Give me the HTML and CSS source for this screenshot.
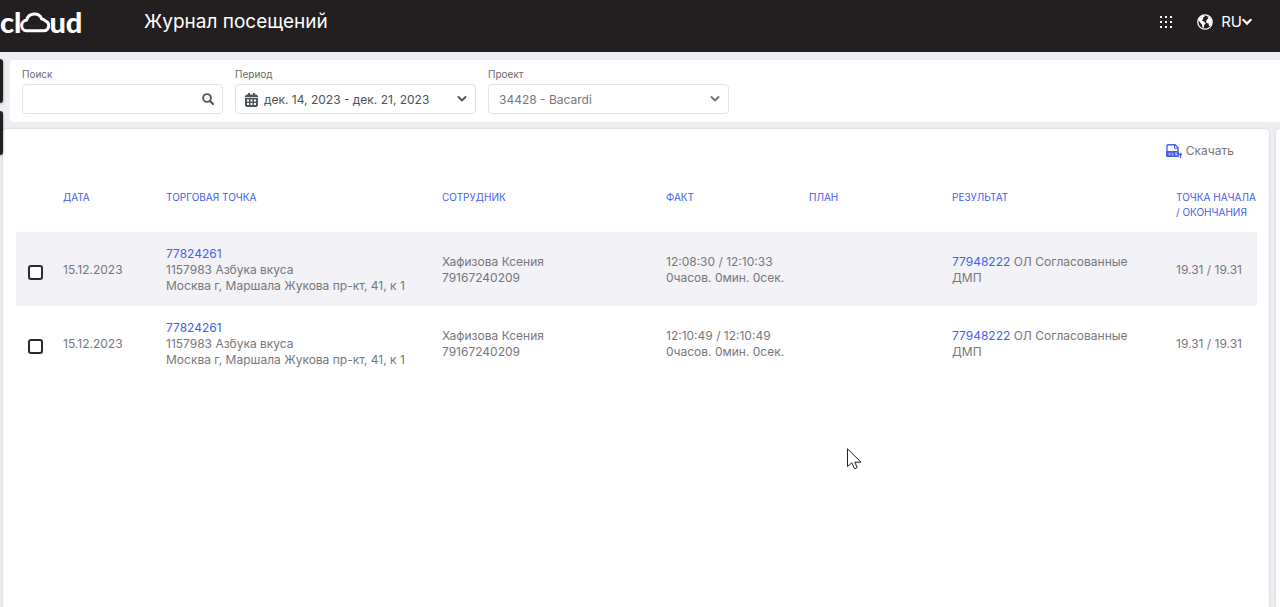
FILE: index.html
```html
<!DOCTYPE html>
<html lang="ru">
  <head>
    <meta charset="UTF-8" />
    <meta name="viewport" content="width=device-width, initial-scale=1.0" />
    <title>Журнал посещений</title>
    <link rel="stylesheet" href="styles.css">
  </head>

  <body>
    <header class="topbar">
      <a class="logo" href="#" aria-label="cloud">
        <span>cl</span>
        <svg class="logo-cloud" viewBox="0 0 31 22" width="31" height="22">
          <path d="M7 19.700h17.500a5.100 5.100 0 0 0 1.800-9.900 5 5 0 0 0-3.500-1.800A8 8 0 0 0 7.600 9.200 5.300 5.300 0 0 0 7 19.700z" fill="none" stroke="#fff" stroke-width="3" stroke-linejoin="round" />
        </svg>
        <span>ud</span>
      </a>
      <h1 class="page-title">Журнал посещений</h1>
      <div class="topbar-tools">
        <button class="icon-button" type="button" aria-label="Меню">
          <svg viewBox="0 0 13 13" width="13" height="13" fill="#fff">
            <path d="M0 0h2v2H0zM5 0h2v2H5zM10 0h2v2h-2zM0 5h2v2H0zM5 5h2v2H5zM10 5h2v2h-2zM0 10h2v2H0zM5 10h2v2H5zM10 10h2v2h-2z" />
          </svg>
        </button>
        <button class="lang" type="button">
          <svg viewBox="0 0 16 16" width="16" height="16">
            <circle cx="8" cy="8" r="7.2" fill="none" stroke="#fff" stroke-width="1.3" />
            <path d="M2 4.600 4.600 2l3.200-.8L7.300 3l-1.600.8.6 1.200-1.500 1.600 2.600 1.200 1.300 1.600-1.500 1.600-.5 3.200-1.200-.6-.7-3.200-1.600-1.900L2 6.800zM10 2.200l2.600 1 2 2.800.2 3.600-1.600 2.600-1.300-.5-.3-2.300-2-.5-.6-2L10.200 5.300l1.300-.6z" fill="#fff" />
          </svg>
          <span>RU</span>
          <svg class="lang-arrow" viewBox="0 0 10 8" width="10" height="8">
            <path d="M1.200 1.800 5 5.600 8.800 1.800" fill="none" stroke="#fff" stroke-width="2.200" stroke-linecap="round" />
          </svg>
        </button>
      </div>
    </header>

    <div class="side-tabs">
      <span class="side-tab"></span>
      <span class="side-tab"></span>
    </div>

    <form class="filters">
      <div class="field field-search">
        <label for="search">Поиск</label>
        <div class="control">
          <input id="search" type="text" />
          <svg class="search-icon" viewBox="0 0 12 12" width="12" height="12">
            <circle cx="5" cy="5" r="3.900" fill="none" stroke="#54585c" stroke-width="1.900" />
            <path d="M8 8l3 3" stroke="#54585c" stroke-width="2.200" stroke-linecap="round" />
          </svg>
        </div>
      </div>
      <div class="field">
        <label for="period">Период</label>
        <div class="control">
          <svg class="calendar-icon" viewBox="0 0 13 14" width="13" height="14">
            <path d="M1.500 1.500H3V0h2v1.500h3V0h2v1.500h1.500L13 3v1.200H0V3z" fill="#4f5459" />
            <path d="M0 5h13v7.500L11.500 14h-10L0 12.500z" fill="#4f5459" />
            <path d="M2 6.500h2v2H2zM5.500 6.500h2v2h-2zM9 6.500h2v2H9zM2 10h2v2H2zM5.500 10h2v2h-2zM9 10h2v2H9z" fill="#fff" />
          </svg>
          <select id="period" class="with-icon">
            <option>дек. 14, 2023 - дек. 21, 2023</option>
          </select>
          <svg class="arrow-icon" viewBox="0 0 10 8" width="10" height="8">
            <path d="M1.500 2 5 5.500 8.500 2" fill="none" stroke="#4f5459" stroke-width="1.900" stroke-linecap="round" />
          </svg>
        </div>
      </div>
      <div class="field">
        <label for="project">Проект</label>
        <div class="control">
          <select id="project" class="muted">
            <option>34428 - Bacardi</option>
          </select>
          <svg class="arrow-icon" viewBox="0 0 10 8" width="10" height="8">
            <path d="M1.500 2 5 5.500 8.500 2" fill="none" stroke="#6c757d" stroke-width="1.900" stroke-linecap="round" />
          </svg>
        </div>
      </div>
    </form>

    <div class="content">
      <main class="card">
        <div class="actions">
          <button class="download" type="button">
            <svg viewBox="0 0 16 14" width="16" height="14">
              <path d="M1 9V2Q1 .8 2.200.8H9L12 3.800V9" fill="none" stroke="#4361ee" stroke-width="1.400" />
              <path d="M8.500 1v3.300H12" fill="none" stroke="#4361ee" />
              <rect x="0" y="7" width="13" height="6" rx="1" fill="#4361ee" />
              <path d="M2.500 8.800l2 2.400M4.500 8.800l-2 2.400M6.300 8.600V11.200H7.800M11 8.900H9.500v1h1.500v1.300H9.300" fill="none" stroke="#dfe4ff" stroke-width=".7" />
              <path d="M14.500 14V10M13 11.200l1.500-1.700L16 11.200" fill="none" stroke="#4361ee" stroke-width="1.200" />
            </svg>
            <span>Скачать</span>
          </button>
        </div>
        <table class="visits">
          <colgroup>
            <col class="col-check" />
            <col class="col-date" />
            <col class="col-shop" />
            <col class="col-wide" />
            <col class="col-time" />
            <col class="col-time" />
            <col class="col-wide" />
            <col class="col-point" />
          </colgroup>
          <thead>
            <tr>
              <th></th>
              <th>ДАТА</th>
              <th>ТОРГОВАЯ ТОЧКА</th>
              <th>СОТРУДНИК</th>
              <th>ФАКТ</th>
              <th>ПЛАН</th>
              <th>РЕЗУЛЬТАТ</th>
              <th class="last">ТОЧКА НАЧАЛА<br />/ ОКОНЧАНИЯ</th>
            </tr>
          </thead>
          <tbody>
            <tr>
              <td class="check"><input type="checkbox" aria-label="Выбрать посещение" /></td>
              <td>15.12.2023</td>
              <td><a href="#">77824261</a><br />1157983 Азбука вкуса<br />Москва г, Маршала Жукова пр-кт, 41, к 1</td>
              <td>Хафизова Ксения<br />79167240209</td>
              <td>12:08:30 / 12:10:33<br />0часов. 0мин. 0сек.</td>
              <td></td>
              <td><a href="#">77948222</a> ОЛ Согласованные<br />ДМП</td>
              <td class="last">19.31 / 19.31</td>
            </tr>
            <tr>
              <td class="check"><input type="checkbox" aria-label="Выбрать посещение" /></td>
              <td>15.12.2023</td>
              <td><a href="#">77824261</a><br />1157983 Азбука вкуса<br />Москва г, Маршала Жукова пр-кт, 41, к 1</td>
              <td>Хафизова Ксения<br />79167240209</td>
              <td>12:10:49 / 12:10:49<br />0часов. 0мин. 0сек.</td>
              <td></td>
              <td><a href="#">77948222</a> ОЛ Согласованные<br />ДМП</td>
              <td class="last">19.31 / 19.31</td>
            </tr>
          </tbody>
        </table>
      </main>
      <aside class="side-panel"></aside>
    </div>

    <svg class="cursor" viewBox="0 0 15 22" width="15" height="22">
      <path d="M.5.800V18.500L4.800 14.800 7.500 20.800 10.200 19.600 7.800 14.200H14z" fill="#fff" stroke="#222" />
    </svg>
  </body>
</html>
```
FILE: styles.css
```css
* {
  margin: 0;
  padding: 0;
  box-sizing: border-box;
}
:root {
  --dark: #231f20;
  --page: #edf0f3;
  --blue: #4361ee;
  --text: #77777c;
  --border: #dfe2e6;
}
body {
  display: flex;
  flex-direction: column;
  min-height: 100vh;
  background-color: var(--page);
  color: var(--text);
  font-family: Inter, "Liberation Sans", sans-serif;
  font-size: 12px;
  line-height: 16px;
  overflow-x: hidden;
}
a {
  color: var(--blue);
  text-decoration: none;
}
button {
  display: flex;
  align-items: center;
  border: 0;
  background: none;
  color: inherit;
  font: inherit;
  cursor: pointer;
}
.topbar {
  display: flex;
  align-items: center;
  height: 52px;
  padding: 0 28px 8px 0;
  background-color: var(--dark);
  color: #fff;
}
.logo {
  display: flex;
  align-items: center;
  width: 144px;
  color: #fff;
  font-family: Lato, sans-serif;
  font-size: 29px;
  font-weight: 900;
  line-height: 28px;
}
.logo-cloud {
  margin: 0 -1px 0 -2px;
}
.page-title {
  font-size: 19px;
  font-weight: 400;
  line-height: 24px;
}
.topbar-tools {
  display: flex;
  align-items: center;
  gap: 24px;
  margin-left: auto;
}
.lang {
  gap: 8px;
  font-size: 15px;
}
.lang-arrow {
  margin-left: -8px;
}
.side-tabs {
  position: absolute;
  top: 59px;
  left: 0;
  display: flex;
  flex-direction: column;
  gap: 8px;
}
.side-tab {
  width: 3px;
  height: 44px;
  border-radius: 0 4px 4px 0;
  background-color: var(--dark);
  box-shadow: 0 1px 3px rgba(0, 0, 0, 0.4);
}
.filters {
  display: flex;
  gap: 12px;
  margin: 8px 0 0 10px;
  padding: 6px 12px 8px;
  border-radius: 4px 0 0 4px;
  background-color: #fff;
}
.field {
  width: 241px;
}
.field-search {
  width: 201px;
}
.field label {
  display: block;
  margin-bottom: 2px;
  color: #6a6a6e;
  font-size: 10px;
}
.control {
  position: relative;
}
.control input,
.control select {
  display: block;
  width: 100%;
  height: 30px;
  padding: 1px 30px 0 10px;
  border: 1px solid var(--border);
  border-radius: 4px;
  background-color: #fff;
  color: #505257;
  font: inherit;
  appearance: none;
}
.control select.with-icon {
  padding-left: 28px;
}
.control select.muted {
  color: var(--text);
}
.search-icon,
.arrow-icon,
.calendar-icon {
  position: absolute;
  top: 9px;
  right: 9px;
  pointer-events: none;
}
.arrow-icon {
  top: 11px;
}
.calendar-icon {
  left: 10px;
}
.content {
  display: flex;
  flex: 1;
  gap: 7px;
  margin-top: 7px;
  padding-left: 3px;
}
.card {
  flex: 1;
  padding: 10px 12px 0 13px;
  border-radius: 4px 4px 0 0;
  background-color: #fff;
  box-shadow: 0 0 3px rgba(60, 70, 80, 0.2);
}
.side-panel {
  width: 4px;
  border-radius: 4px 0 0 0;
  background-color: #fff;
  box-shadow: 0 0 3px rgba(60, 70, 80, 0.2);
}
.actions {
  display: flex;
  justify-content: flex-end;
  padding: 4px 23px 0 0;
}
.download {
  gap: 4px;
}
.visits {
  width: 100%;
  margin-top: 19px;
  border-collapse: collapse;
  table-layout: fixed;
}
.col-check {
  width: 47px;
}
.col-date {
  width: 103px;
}
.col-shop {
  width: 276px;
}
.col-wide {
  width: 224px;
}
.col-time {
  width: 143px;
}
.col-point {
  width: 81px;
}
.visits th {
  height: 54px;
  padding: 12px 8px 0 0;
  color: var(--blue);
  font-size: 10px;
  font-weight: 400;
  line-height: 15px;
  text-align: left;
  vertical-align: top;
}
.visits td {
  height: 74px;
  padding: 2px 8px 0 0;
}
.visits .last {
  padding-right: 0;
  white-space: nowrap;
}
.visits tbody tr:nth-child(odd) {
  background-color: #f2f2f7;
}
.visits .check {
  padding: 6px 0 0 12px;
}
.check input {
  display: block;
  width: 15px;
  height: 15px;
  border: 2px solid #2b2b2d;
  border-radius: 3px;
  background-color: #fff;
  appearance: none;
}
.cursor {
  position: absolute;
  top: 448px;
  left: 847px;
  pointer-events: none;
}
```
